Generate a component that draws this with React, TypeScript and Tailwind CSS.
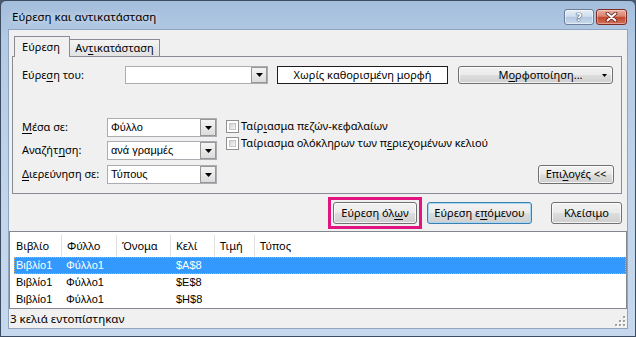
import React from 'react';

const U = ({ children }: { children: React.ReactNode }) => (
  <span className="underline decoration-1 underline-offset-[2px]">{children}</span>
);

const Arrow = () => (
  <svg width="7" height="4" viewBox="0 0 7 4">
    <path d="M0 0h7L3.5 4z" fill="#000" />
  </svg>
);

const grayBtn =
  "flex items-center justify-center rounded-[3px] border border-[#707070] bg-[linear-gradient(to_bottom,#f2f2f2_0%,#ebebeb_48%,#dddddd_52%,#cfcfcf_100%)] shadow-[inset_0_0_0_1px_rgba(255,255,255,0.75)] text-black";

const DropBox = ({ className, value }: { className: string; value?: string }) => (
  <div className={`flex border border-[#abadb3] bg-white ${className}`}>
    <div className="flex flex-1 items-center pl-[3px] font-['Liberation_Sans',sans-serif] text-[11px] text-black">
      {value}
    </div>
    <div className="flex w-[16px] items-center justify-center border border-[#979797] bg-[linear-gradient(to_bottom,#f4f4f4,#dcdcdc)]">
      <Arrow />
    </div>
  </div>
);

const CheckBox = () => (
  <div className="h-[13px] w-[13px] border border-[#8e8f8f] bg-white p-[2px]">
    <div className="h-full w-full border border-[#c4c4c4] bg-[linear-gradient(to_bottom_right,#d4d4d4,#f7f7f7)]" />
  </div>
);

const cols = ["w-[52px]", "w-[55px]", "w-[54px]", "w-[44px]", "w-[40px]"];

const rows = [
  { book: "Βιβλίο1", sheet: "Φύλλο1", cell: "$A$8", selected: true },
  { book: "Βιβλίο1", sheet: "Φύλλο1", cell: "$E$8", selected: false },
  { book: "Βιβλίο1", sheet: "Φύλλο1", cell: "$H$8", selected: false },
];

export default function App() {
  return (
    <div className="h-[337px] w-[636px] bg-[#4b5b6e]">
      <div className="flex h-full w-full flex-col rounded-t-[6px] border border-[#3c4d63] bg-[linear-gradient(to_bottom,#a3bedc_0%,#b4cae4_12%,#c2d5eb_60%,#c6d8ed_100%)] font-['Noto_Sans',sans-serif] text-[11px] text-black">
        {/* title bar */}
        <div className="flex h-[28px] items-start pl-[11px] pr-[8px]">
          <div className="mt-[7px] leading-[18px] text-[11.5px] text-black [text-shadow:0_0_6px_rgba(255,255,255,0.9)]">
            Εύρεση και αντικατάσταση
          </div>
          <div className="ml-auto mt-[8px] flex gap-[2px]">
            <div className="flex h-[16px] w-[30px] items-center justify-center rounded-[3px] border border-[#6b7e95] bg-[linear-gradient(to_bottom,#e6eef7_0%,#d0deee_45%,#b4c8e0_52%,#c8d9ec_100%)] shadow-[inset_0_0_0_1px_rgba(255,255,255,0.5)]">
              <span className="font-['DejaVu_Sans',sans-serif] text-[11px] font-bold leading-none text-white [text-shadow:0_0_1px_#3a4a60,0_0_1px_#3a4a60,0_0_1px_#3a4a60]">
                ?
              </span>
            </div>
            <div className="flex h-[16px] w-[31px] items-center justify-center rounded-[3px] border border-[#7a2d24] bg-[linear-gradient(to_bottom,#eab0a3_0%,#d9836f_45%,#c24730_52%,#d27059_100%)] shadow-[inset_0_0_0_1px_rgba(255,255,255,0.35)]">
              <svg width="13" height="10" viewBox="0 0 13 10">
                <path d="M2.5 1.5l8 7M10.5 1.5l-8 7" stroke="#5c1e16" strokeWidth="3.6" strokeLinecap="round" />
                <path d="M2.5 1.5l8 7M10.5 1.5l-8 7" stroke="#ffffff" strokeWidth="2" strokeLinecap="round" />
              </svg>
            </div>
          </div>
        </div>

        {/* client area */}
        <div className="mx-[7px] mb-[7px] flex flex-1 flex-col border border-[#8fa5bf] bg-[#f0f0f0]">
          {/* tabs */}
          <div className="mt-[6px] flex h-[20px] items-end pl-[5px]">
            <div className="relative z-10 -mb-px flex h-[21px] w-[56px] items-center justify-center border border-b-0 border-[#898c95] bg-[#f0f0f0] pr-[2px]">
              Εύρεση
            </div>
            <div className="flex h-[17px] w-[90px] items-center justify-center border border-b-0 border-l-0 border-[#898c95] bg-[linear-gradient(to_bottom,#f4f4f4,#e2e2e2)] pt-[1px]">
              Αν<U>τ</U>ικατάσταση
            </div>
          </div>

          {/* tab panel */}
          <div className="ml-[3px] mr-[5px] flex flex-col border border-[#898c95] bg-[#f0f0f0] pb-[9px] pl-[9px] pr-[7px] pt-[9px]">
            <div className="flex h-[18px] items-center">
              <div className="w-[103px]">
                Εύρε<U>σ</U>η του:
              </div>
              <DropBox className="h-[18px] w-[143px]" />
              <div className="ml-[9px] flex h-[18px] w-[171px] items-center justify-center border border-[#1e1e1e] bg-white">
                Χωρίς καθορισμένη μορφή
              </div>
              <div className={`${grayBtn} ml-[10px] h-[18px] w-[155px]`}>
                <span className="flex-1 pl-[20px] text-center">
                  Μ<U>ο</U>ρφοποίηση...
                </span>
                <svg width="5" height="3" viewBox="0 0 5 3" className="mr-[5px]">
                  <path d="M0 0h5L2.5 3z" fill="#000" />
                </svg>
              </div>
            </div>

            <div className="mt-[34px] flex items-start">
              <div className="flex flex-col">
                <div className="flex h-[19px] items-center">
                  <div className="w-[85px]">
                    <U>Μ</U>έσα σε:
                  </div>
                  <DropBox className="h-[19px] w-[110px]" value="Φύλλο" />
                </div>
                <div className="mt-[4px] flex h-[19px] items-center">
                  <div className="w-[85px]">
                    Αναζήτ<U>η</U>ση:
                  </div>
                  <DropBox className="h-[19px] w-[110px]" value="ανά γραμμές" />
                </div>
                <div className="mt-[5px] flex h-[19px] items-center">
                  <div className="w-[85px]">
                    <U>Δ</U>ιερεύνηση σε:
                  </div>
                  <DropBox className="h-[19px] w-[110px]" value="Τύπους" />
                </div>
              </div>

              <div className="ml-[9px] flex flex-col">
                <div className="flex h-[17px] items-center">
                  <CheckBox />
                  <span className="ml-[2px]">
                    Ταίρ<U>ι</U>ασμα πεζών-κεφαλαίων
                  </span>
                </div>
                <div className="flex h-[17px] items-center">
                  <CheckBox />
                  <span className="ml-[2px]">
                    Ταίριασμα ολόκληρων των π<U>ε</U>ριεχομένων κελιού
                  </span>
                </div>
              </div>

              <div className={`${grayBtn} ml-auto h-[19px] w-[76px] self-end`}>
                Επι<U>λ</U>ογές &lt;&lt;
              </div>
            </div>
          </div>

          {/* buttons */}
          <div className="mt-[3px] flex items-center justify-end pr-[5px]">
            <div className="border-[3px] border-[#e2147f] p-[2px]">
              <div className={`${grayBtn} h-[22px] w-[84px]`}>
                Εύρεση όλ<U>ω</U>ν
              </div>
            </div>
            <div className="ml-[5px] flex h-[22px] w-[105px] items-center justify-center rounded-[3px] border border-[#3c7fb1] bg-[linear-gradient(to_bottom,#f2f2f2_0%,#ebebeb_48%,#dddddd_52%,#cfcfcf_100%)] shadow-[inset_0_0_0_1px_#a6d8f4]">
              Εύρεση ε<U>π</U>όμενου
            </div>
            <div className={`${grayBtn} ml-[19px] h-[22px] w-[71px]`}>Κλείσιμο</div>
          </div>

          {/* results list */}
          <div className="mt-[2px] h-[78px] border border-[#828790] bg-white">
            <div className="flex h-[25px] items-end">
              {["Βιβλίο", "Φύλλο", "Όνομα", "Κελί", "Τιμή"].map((h, i) => (
                <div
                  key={h}
                  className={`${cols[i]} flex h-[22px] items-center border-r border-[#e1e1e1] ${i === 0 ? "pl-[6px]" : "pl-[5px]"}`}
                >
                  {h}
                </div>
              ))}
              <div className="flex h-[22px] flex-1 items-center pl-[5px]">Τύπος</div>
            </div>
            {rows.map((r) => (
              <div
                key={r.cell}
                className={`ml-[4px] flex h-[17px] items-center font-['Liberation_Sans',sans-serif] text-[11px] ${
                  r.selected
                    ? "bg-[#3399ff] text-white outline-1 -outline-offset-1 outline-dotted outline-[#e6a860]"
                    : "text-black"
                }`}
              >
                <div className="w-[48px] pl-[2px]">{r.book}</div>
                <div className="w-[55px] pl-[4px]">{r.sheet}</div>
                <div className="w-[54px]" />
                <div className="w-[44px] pl-[5px]">{r.cell}</div>
              </div>
            ))}
          </div>

          {/* status bar */}
          <div className="flex flex-1 items-center pl-[1px]">
            <span className="text-[11.5px]">3 κελιά εντοπίστηκαν</span>
            <svg width="11" height="11" viewBox="0 0 11 11" className="ml-auto mr-[1px] mt-auto mb-[1px]">
              {[
                [8, 0],
                [8, 4],
                [4, 4],
                [8, 8],
                [4, 8],
                [0, 8],
              ].map(([x, y]) => (
                <g key={`${x}-${y}`}>
                  <rect x={x + 1} y={y + 1} width="2" height="2" fill="#ffffff" />
                  <rect x={x} y={y} width="2" height="2" fill="#a0a0a0" />
                </g>
              ))}
            </svg>
          </div>
        </div>
      </div>
    </div>
  );
}
